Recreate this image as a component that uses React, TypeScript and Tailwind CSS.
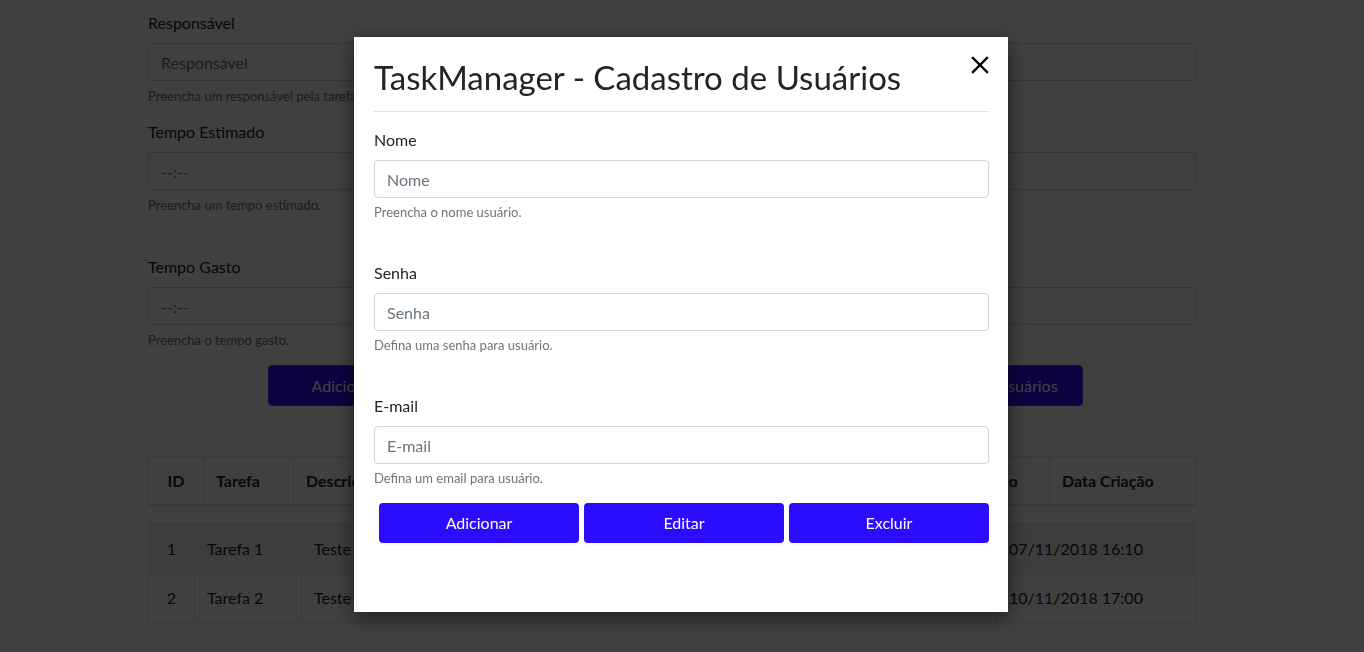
import React from "react";

const headers = [
  { label: "ID", w: "w-[54px]", center: true },
  { label: "Tarefa", w: "w-[90px]" },
  { label: "Descrição", w: "w-[180px]" },
  { label: "", w: "w-[140px]" },
  { label: "", w: "w-[150px]" },
  { label: "", w: "w-[130px]" },
  { label: "Data Conclusão", w: "w-[156px]" },
  { label: "Data Criação", w: "flex-1" },
];

const bodyCols = ["w-[45px]", "w-[107px]", "w-[168px]", "w-[90px]", "w-[183px]", "w-[84px]", "w-[84px]", "w-[86px]", "flex-1"];

const rows = [
  ["1", "Tarefa 1", "Teste Tarefa 1", "", "", "", "", "", "07/11/2018 16:10"],
  ["2", "Tarefa 2", "Teste Tarefa 2", "", "", "", "", "", "10/11/2018 17:00"],
];

function BgField({ label, placeholder, help }: { label: string; placeholder: string; help: string }) {
  return (
    <div>
      <label className="block text-base leading-6 text-[#212529]">{label}</label>
      <input
        placeholder={placeholder}
        className="mt-2 block h-[38px] w-full rounded border border-[#ced4da] px-3 text-base text-[#495057] placeholder:text-[#6c757d]"
      />
      <p className="mt-[6px] text-[13px] leading-[19px] text-[#6c757d]">{help}</p>
    </div>
  );
}

function ModalField({ label, placeholder, help }: { label: string; placeholder: string; help: string }) {
  return (
    <div>
      <label className="block text-base leading-6 text-[#212529]">{label}</label>
      <input
        placeholder={placeholder}
        className="mt-2 block h-[38px] w-full rounded border border-[#ced4da] px-3 text-base text-[#495057] placeholder:text-[#6c757d]"
      />
      <p className="mt-[5px] text-[13px] leading-[19px] text-[#6c757d]">{help}</p>
    </div>
  );
}

export default function App() {
  return (
    <div className="relative h-[652px] overflow-hidden bg-white font-[Lato,sans-serif]">
      {/* página por trás do modal */}
      <div className="ml-[148px] w-[1048px] pt-[11px]">
        <div className="flex flex-col gap-[14px]">
          <BgField label="Responsável" placeholder="Responsável" help="Preencha um responsável pela tarefa." />
          <BgField label="Tempo Estimado" placeholder="--:--" help="Preencha um tempo estimado." />
        </div>
        <div className="mt-10">
          <BgField label="Tempo Gasto" placeholder="--:--" help="Preencha o tempo gasto." />
        </div>
        <div className="mt-[15px] flex justify-center gap-[5px] pl-[7px]">
          {["Adicionar Tarefa", "Editar Tarefa", "Excluir Tarefa", "Cadastro de Usuários"].map((b) => (
            <button key={b} className="h-[41px] w-[200px] rounded border border-[#4a3cff] bg-[#2b0cff] text-base text-white">
              {b}
            </button>
          ))}
        </div>

        <div className="mt-[50px] flex h-[50px] border border-b-2 border-[#dee2e6]">
          {headers.map((h, i) => (
            <div
              key={i}
              className={`${h.w} flex items-center ${h.center ? "justify-center" : "px-[12px]"} ${i > 0 ? "border-l border-[#dee2e6]" : ""} overflow-hidden whitespace-nowrap text-base font-bold text-[#212529]`}
            >
              {h.label}
            </div>
          ))}
        </div>

        <div className="mt-[17px] border border-[#dee2e6]">
          {rows.map((r, ri) => (
            <div key={ri} className={`flex h-[49px] ${ri > 0 ? "border-t border-[#dee2e6]" : "bg-[#f2f2f2]"}`}>
              {r.map((c, ci) => (
                <div
                  key={ci}
                  className={`${bodyCols[ci]} flex items-center ${ci === 0 ? "justify-center" : "px-[12px]"} ${ci > 0 ? "border-l border-[#dee2e6]" : ""} overflow-hidden whitespace-nowrap text-base text-[#212529]`}
                >
                  {c}
                </div>
              ))}
            </div>
          ))}
        </div>
      </div>

      {/* modal */}
      <div className="fixed inset-0 bg-black/75">
        <div className="ml-[354px] mt-[37px] h-[575px] w-[654px] bg-white pl-5 pr-[19px] shadow-[0_5px_20px_rgba(0,0,0,0.55)]">
          <div className="relative border-b border-[#dee2e6] pt-[20px] pb-[14px]">
            <h1 className="text-[33px] leading-10 text-[#212529]">TaskManager - Cadastro de Usuários</h1>
            <button className="absolute right-0 top-[19px] p-0 text-black">
              <svg width="18" height="18" viewBox="0 0 18 18" fill="none" stroke="currentColor" strokeWidth="2.4" strokeLinecap="square">
                <path d="M2 2 L16 16 M16 2 L2 16" />
              </svg>
            </button>
          </div>

          <div className="mt-4 flex flex-col gap-[39px]">
            <ModalField label="Nome" placeholder="Nome" help="Preencha o nome usuário." />
            <ModalField label="Senha" placeholder="Senha" help="Defina uma senha para usuário." />
            <ModalField label="E-mail" placeholder="E-mail" help="Defina um email para usuário." />
          </div>

          <div className="mt-[15px] flex gap-[5px] pl-[5px]">
            {["Adicionar", "Editar", "Excluir"].map((b) => (
              <button key={b} className="h-10 w-[200px] rounded bg-[#2b0cff] text-base text-white">
                {b}
              </button>
            ))}
          </div>
        </div>
      </div>
    </div>
  );
}
